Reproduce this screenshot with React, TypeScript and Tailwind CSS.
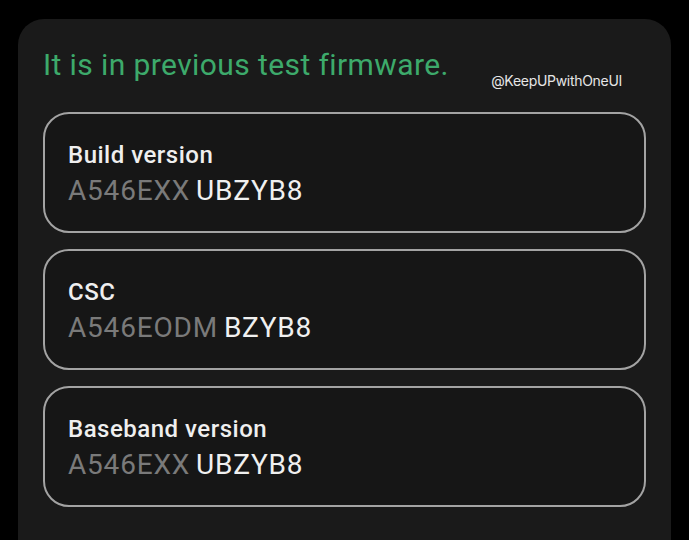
export default function App() {
  const rows = [
    { label: "Build version", dim: "A546EXX", bright: "UBZYB8" },
    { label: "CSC", dim: "A546EODM", bright: "BZYB8" },
    { label: "Baseband version", dim: "A546EXX", bright: "UBZYB8" },
  ];

  return (
    <div className="w-[689px] h-[540px] bg-black overflow-hidden pt-[19px] px-[18px] font-['Roboto',sans-serif]">
      <div className="bg-[#1a1a1a] rounded-t-[26px] h-[540px] px-[25px] pt-[24px]">
        <div className="flex items-start justify-between h-[69px]">
          <h1 className="text-[#3daa6b] text-[30px] leading-[44px] tracking-[0.4px]">
            It is in previous test firmware.
          </h1>
          <span className="text-[#e6e6e6] text-[14px] mt-[27px] mr-[24px] font-['Inter',sans-serif] tracking-[-0.3px]">
            @KeepUPwithOneUI
          </span>
        </div>
        <div className="flex flex-col gap-[16px]">
          {rows.map((r) => (
            <div
              key={r.label}
              className="h-[121px] border-2 border-[#a3a3a3] rounded-[26px] bg-[#161616] pl-[23px] pt-[26px]"
            >
              <div className="text-[#efefef] text-[24px] font-medium leading-[30px] tracking-[0.5px]">{r.label}</div>
              <div className="text-[28px] leading-[36px] mt-[3px] tracking-[0.8px]">
                <span className="text-[#7a7a7a]">{r.dim}</span>
                <span className="text-[#f0f0f0] ml-[6px]">{r.bright}</span>
              </div>
            </div>
          ))}
        </div>
      </div>
    </div>
  );
}
